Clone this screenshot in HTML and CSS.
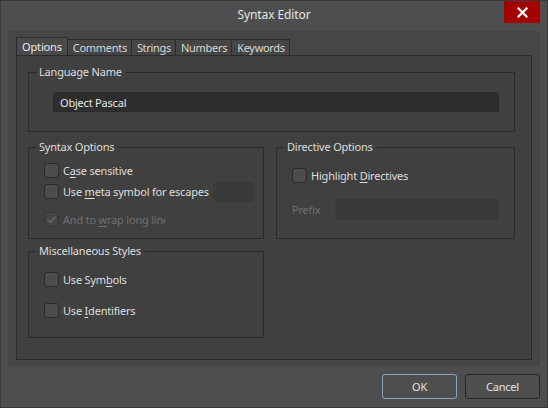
FILE: index.html
```html
<!DOCTYPE html>
<html lang="en">
  <head>
    <meta charset="utf-8">
    <title>Syntax Editor</title>
    <link rel="stylesheet" href="styles.css">
  </head>
  <body>
    <div class="window">
      <div class="titlebar">
        <span class="title">Syntax Editor</span>
        <div class="close">
          <svg width="11" height="11" viewBox="0 0 11 11"><path d="M1.5 1.5l8 8M9.5 1.5l-8 8" stroke="#fff" stroke-width="2.2" stroke-linecap="square"/></svg>
        </div>
      </div>

      <div class="panel">
        <ul class="tabs">
          <li class="active">Options</li>
          <li>Comments</li>
          <li>Strings</li>
          <li>Numbers</li>
          <li>Keywords</li>
        </ul>
        <div class="page">
          <fieldset class="group lang">
            <legend>Language Name</legend>
            <div class="input">Object Pascal</div>
          </fieldset>

          <div class="cols">
            <div class="col">
              <fieldset class="group syntax">
                <legend>Syntax Options</legend>
                <div class="row">
                  <span class="box"></span>
                  <span class="label">C<u>a</u>se sensitive</span>
                </div>
                <div class="row">
                  <span class="box"></span>
                  <span class="label">Use <u>m</u>eta symbol for escapes</span>
                  <span class="input small"></span>
                </div>
                <div class="row disabled wrap">
                  <span class="box checked">
                    <svg width="11" height="9" viewBox="0 0 11 9"><path d="M1.5 4.5l3 3 5-6" fill="none" stroke="#6a6a6a" stroke-width="1.4"/></svg>
                  </span>
                  <span class="label clip">And to <u>w</u>rap long lines</span>
                </div>
              </fieldset>

              <fieldset class="group misc">
                <legend>Miscellaneous Styles</legend>
                <div class="row">
                  <span class="box"></span>
                  <span class="label">Use Sym<u>b</u>ols</span>
                </div>
                <div class="row second">
                  <span class="box"></span>
                  <span class="label">Use <u>I</u>dentifiers</span>
                </div>
              </fieldset>
            </div>

            <div class="col">
              <fieldset class="group directive">
                <legend>Directive Options</legend>
                <div class="row">
                  <span class="box"></span>
                  <span class="label">Highlight <u>D</u>irectives</span>
                </div>
                <div class="row prefix disabled">
                  <span class="label prefix-label">Prefix</span>
                  <span class="input dim"></span>
                </div>
              </fieldset>
            </div>
          </div>
        </div>
      </div>

      <div class="footer">
        <div class="btn default">OK</div>
        <div class="btn">Cancel</div>
      </div>
    </div>
  </body>
</html>
```

FILE: styles.css
```css
html,body,div,ul,li,fieldset,legend{
  margin:0;
  padding:0;
}
ul{
  list-style:none;
}
body{
  width:548px;
  height:408px;
  overflow:hidden;
  background:#4e4e4e;
  font-family:"Noto Sans","Open Sans",sans-serif;
  font-size:11px;
  letter-spacing:-0.2px;
  color:#dedede;
}
.window{
  box-sizing:border-box;
  width:548px;
  height:408px;
  border:1px solid #383838;
  background:#4e4e4e;
  display:flex;
  flex-direction:column;
}

/* title bar */
.titlebar{
  height:30px;
  display:grid;
  grid-template-columns:1fr auto 1fr;
  align-items:start;
}
.title{
  grid-column:2;
  line-height:28px;
  font-size:12px;
  letter-spacing:-0.1px;
  color:#e6e6e6;
}
.close{
  grid-column:3;
  justify-self:end;
  width:36px;
  height:22px;
  margin-right:7px;
  background:#a50000;
  display:flex;
  align-items:center;
  justify-content:center;
}

/* central panel */
.panel{
  height:335px;
  margin:0 7px;
  padding:7px 8px 6px;
  box-sizing:border-box;
  background:#464646;
  display:flex;
  flex-direction:column;
}
.tabs{
  display:flex;
  align-items:flex-end;
  height:17px;
  padding-left:1px;
}
.tabs li{
  height:15px;
  line-height:15px;
  padding:0 4px 0 5px;
  margin-left:-1px;
  border:1px solid #2c2c2c;
  border-bottom:none;
  background:#454545;
  color:#d8d8d8;
  letter-spacing:-0.3px;
}
.tabs li.active{
  height:17px;
  line-height:17px;
  padding:0 5px;
  letter-spacing:-0.15px;
  background:#4a4a4a;
  color:#ececec;
  position:relative;
  z-index:1;
}
.page{
  flex:1;
  border:1px solid #2b2b2b;
  background:#404040;
  padding:8px 16px 0 11px;
}

/* group boxes */
.group{
  border:1px solid #2a2a2a;
  min-width:0;
}
.group legend{
  margin-left:-8px;
  padding:0 4px 0 3px;
  line-height:16px;
  color:#dedede;
}
.lang{
  padding:12px 15px 19px 24px;
}
.lang legend{
  margin-left:-17px;
}
.input{
  box-sizing:border-box;
  height:20px;
  line-height:19px;
  padding-left:6px;
  background:#2e2e2e;
  border:1px solid #2a2a2a;
  border-radius:3px;
  color:#e8e8e8;
}
.cols{
  display:grid;
  grid-template-columns:236px 239px;
  column-gap:12px;
  align-items:start;
  margin-top:7px;
}
.syntax{
  padding:5px 9px 8px 15px;
}
.misc{
  margin-top:4px;
  padding:10px 9px 16px 15px;
}
.directive{
  padding:10px 15px 18px 15px;
}
.row{
  display:flex;
  align-items:center;
  height:21px;
}
.row.wrap{
  margin-top:7px;
}
.row.second{
  margin-top:10px;
}
.row.prefix{
  margin-top:13px;
}
.box{
  box-sizing:border-box;
  flex:none;
  width:15px;
  height:15px;
  margin-right:4px;
  border:1px solid #2a2a2a;
  border-radius:3px;
  background:#4c4c4c;
  display:flex;
  align-items:center;
  justify-content:center;
}
.box.checked{
  background:#444;
  border-color:#363636;
}
.label{
  white-space:nowrap;
}
.label u{
  text-underline-offset:2px;
}
.disabled .label{
  color:#6f6f6f;
}
.clip{
  width:102px;
  overflow:hidden;
}
.input.small{
  width:41px;
  height:20px;
  margin-left:auto;
  background:#3a3a3a;
  border-color:#3a3a3a;
}
.prefix-label{
  width:43px;
  flex:none;
}
.input.dim{
  flex:1;
  height:21px;
  background:#393939;
  border-color:#393939;
}

/* buttons */
.footer{
  flex:1;
  display:flex;
  justify-content:flex-end;
  gap:8px;
  padding:8px 7px 0 0;
}
.btn{
  box-sizing:border-box;
  width:75px;
  height:25px;
  line-height:23px;
  text-align:center;
  border:1px solid #252525;
  border-radius:3px;
  color:#e4e4e4;
}
.btn.default{
  border-color:#8aa6bf;
}
```
